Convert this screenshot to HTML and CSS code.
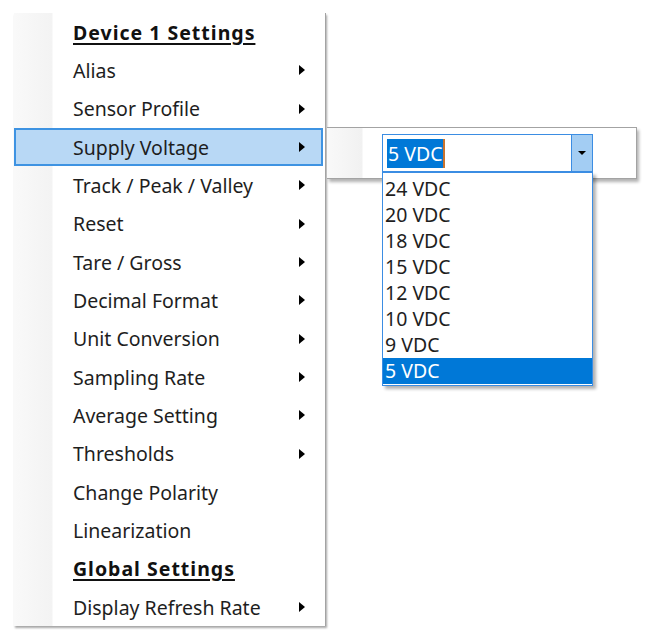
FILE: index.html
```html
<!DOCTYPE html>
<html>
<head>
<meta charset="utf-8">
<link rel="stylesheet" href="styles.css">
</head>
<body>
<div class="stage">
  <div class="menu">
    <div class="row heading"><span class="label">Device 1 Settings</span></div>
    <div class="row"><span class="label">Alias</span><span class="arrow"></span></div>
    <div class="row"><span class="label">Sensor Profile</span><span class="arrow"></span></div>
    <div class="row active"><span class="label">Supply Voltage</span><span class="arrow"></span></div>
    <div class="row"><span class="label">Track / Peak / Valley</span><span class="arrow"></span></div>
    <div class="row"><span class="label">Reset</span><span class="arrow"></span></div>
    <div class="row"><span class="label">Tare / Gross</span><span class="arrow"></span></div>
    <div class="row"><span class="label">Decimal Format</span><span class="arrow"></span></div>
    <div class="row"><span class="label">Unit Conversion</span><span class="arrow"></span></div>
    <div class="row"><span class="label">Sampling Rate</span><span class="arrow"></span></div>
    <div class="row"><span class="label">Average Setting</span><span class="arrow"></span></div>
    <div class="row"><span class="label">Thresholds</span><span class="arrow"></span></div>
    <div class="row"><span class="label">Change Polarity</span></div>
    <div class="row"><span class="label">Linearization</span></div>
    <div class="row heading"><span class="label">Global Settings</span></div>
    <div class="row"><span class="label">Display Refresh Rate</span><span class="arrow"></span></div>
  </div>

  <div class="submenu">
    <div class="combo">
      <div class="combo-text"><span class="sel">5 VDC</span><span class="caret"></span></div>
      <div class="combo-btn"><span class="down"></span></div>
      <div class="dropdown">
        <div class="opt">24 VDC</div>
        <div class="opt">20 VDC</div>
        <div class="opt">18 VDC</div>
        <div class="opt">15 VDC</div>
        <div class="opt">12 VDC</div>
        <div class="opt">10 VDC</div>
        <div class="opt">9 VDC</div>
        <div class="opt selected">5 VDC</div>
      </div>
    </div>
  </div>
</div>
</body>
</html>
```

FILE: styles.css
```css
* { box-sizing: border-box; }
html, body {
  margin: 0;
  padding: 0;
  background: #ffffff;
}
body {
  font-family: "Noto Sans", "Open Sans", sans-serif;
  font-size: 19.5px;
  color: #1e1e1e;
}
.stage {
  position: relative;
  width: 651px;
  height: 642px;
  padding-top: 13px;
  padding-left: 14px;
}
.menu {
  width: 312px;
  background: linear-gradient(to right, #f9f9f9 0, #f3f3f3 38px, #ffffff 39px);
  border-right: 1px solid #a3a3a3;
  box-shadow: 1px 2px 2px rgba(0, 0, 0, 0.35);
}
.row {
  height: 38.33px;
  display: flex;
  align-items: center;
  justify-content: space-between;
  padding-left: 59px;
  padding-right: 20px;
}
.row.heading .label {
  font-weight: 700;
  letter-spacing: 1px;
  text-decoration: underline;
  text-decoration-thickness: 2px;
  text-underline-offset: 3px;
  color: #111;
}
.row.active {
  background: #b8d8f5;
  border: 2px solid #3e93e2;
  margin-right: 2px;
  padding-left: 57px;
  padding-right: 16px;
}
.arrow {
  width: 0;
  height: 0;
  border-top: 5px solid transparent;
  border-bottom: 5px solid transparent;
  border-left: 6px solid #000;
}
.submenu {
  position: absolute;
  left: 327px;
  top: 127px;
  width: 310px;
  height: 52px;
  border: 1px solid #a3a3a3;
  border-left: none;
  background: linear-gradient(to right, #f9f9f9 0, #f1f1f1 35px, #ffffff 36px);
  box-shadow: 2px 3px 3px rgba(0, 0, 0, 0.3);
  padding-top: 6px;
  padding-left: 55px;
}
.combo {
  position: relative;
  width: 211px;
  height: 38px;
  border: 1px solid #3b8de3;
  background: #fff;
  display: flex;
}
.combo-text {
  flex: 1;
  display: flex;
  align-items: center;
  padding-left: 4px;
}
.sel {
  background: #0078d7;
  color: #fff;
  line-height: 29px;
  padding: 0 1px;
}
.caret {
  width: 2px;
  height: 29px;
  background: #c9742f;
}
.combo-btn {
  width: 21px;
  background: #a3cdf3;
  border-left: 1px solid #3b8de3;
  display: flex;
  align-items: center;
  justify-content: center;
}
.down {
  width: 0;
  height: 0;
  border-left: 4px solid transparent;
  border-right: 4px solid transparent;
  border-top: 4px solid #000;
}
.dropdown {
  position: absolute;
  left: -1px;
  top: 37px;
  width: 211px;
  height: 214px;
  border: 1px solid #3b8de3;
  background: #fff;
  padding-top: 3px;
  box-shadow: 3px 3px 3px rgba(0, 0, 0, 0.3);
}
.opt {
  height: 26px;
  line-height: 26px;
  padding-left: 2px;
}
.opt.selected {
  background: #0078d7;
  color: #fff;
}
```
